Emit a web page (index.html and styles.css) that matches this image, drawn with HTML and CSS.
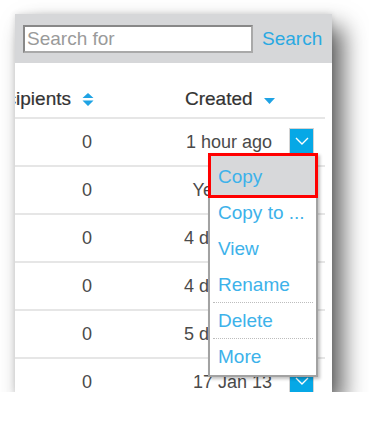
FILE: index.html
```html
<!DOCTYPE html>
<html lang="en">
<head>
  <meta charset="UTF-8">
  <meta name="viewport" content="width=device-width, initial-scale=1.0">
  <title>Messages</title>
  <link rel="stylesheet" href="styles.css">
</head>
<body>
  <div class="frame">
    <div class="search-bar">
      <input class="search-input" type="text" placeholder="Search for">
      <a class="search-link" href="#">Search</a>
    </div>

    <div class="table">
      <div class="head">
        <div class="num"><span class="label">Recipients</span>
          <svg class="sort" width="12" height="13" viewBox="0 0 12 13"><path d="M6 0 L11.5 5 H0.5 Z M0.5 7.5 H11.5 L6 13 Z" fill="#1fa3e4"/></svg>
        </div>
        <div class="date-h">Created
          <svg class="down" width="11" height="6" viewBox="0 0 11 6"><path d="M0 0 H11 L5.5 6 Z" fill="#1fa3e4"/></svg>
        </div>
      </div>

      <div class="row"><div class="num">0</div><div class="date">1 hour ago</div><button class="drop"><svg width="14" height="8" viewBox="0 0 14 8"><path d="M1 1 L7 7 L13 1" fill="none" stroke="#fff" stroke-width="1.4"/></svg></button></div>
      <div class="row"><div class="num">0</div><div class="date">Yesterday</div><button class="drop"><svg width="14" height="8" viewBox="0 0 14 8"><path d="M1 1 L7 7 L13 1" fill="none" stroke="#fff" stroke-width="1.4"/></svg></button></div>
      <div class="row"><div class="num">0</div><div class="date">4 days ago</div><button class="drop"><svg width="14" height="8" viewBox="0 0 14 8"><path d="M1 1 L7 7 L13 1" fill="none" stroke="#fff" stroke-width="1.4"/></svg></button></div>
      <div class="row"><div class="num">0</div><div class="date">4 days ago</div><button class="drop"><svg width="14" height="8" viewBox="0 0 14 8"><path d="M1 1 L7 7 L13 1" fill="none" stroke="#fff" stroke-width="1.4"/></svg></button></div>
      <div class="row"><div class="num">0</div><div class="date">5 days ago</div><button class="drop"><svg width="14" height="8" viewBox="0 0 14 8"><path d="M1 1 L7 7 L13 1" fill="none" stroke="#fff" stroke-width="1.4"/></svg></button></div>
      <div class="row"><div class="num">0</div><div class="date">17 Jan 13</div><button class="drop"><svg width="14" height="8" viewBox="0 0 14 8"><path d="M1 1 L7 7 L13 1" fill="none" stroke="#fff" stroke-width="1.4"/></svg></button></div>
    </div>

    <ul class="menu">
      <li class="item active">Copy</li>
      <li class="item">Copy to ...</li>
      <li class="item">View</li>
      <li class="item sep">Rename</li>
      <li class="item sep">Delete</li>
      <li class="item">More</li>
    </ul>
  </div>
</body>
</html>
```

FILE: styles.css
```css
body { margin: 0; background: #fff; font-family: "Liberation Sans", Arial, sans-serif; }

.frame { position: relative; width: 317px; height: 378px; margin: 14px 0 0 15px; background: #fff; overflow: hidden; box-shadow: 11px 13px 22px rgba(0,0,0,0.62), 0 0 6px rgba(0,0,0,0.12); }

.search-bar { display: flex; align-items: center; height: 49px; padding-left: 8px; background: #d6d7d9; }
.search-input { box-sizing: border-box; width: 230px; height: 28px; margin: 0; padding: 0 2px; border: 2px solid #888; border-right-color: #a9a9a9; border-bottom-color: #a9a9a9; background: #fff; font: 19px "Liberation Sans", Arial, sans-serif; color: #444; outline: none; }
.search-input::placeholder { color: #9a9a9a; }
.search-link { margin-left: 9px; font-size: 19px; color: #2aa9e2; text-decoration: none; }

.table { margin-right: 7px; }
.head, .row { display: flex; white-space: nowrap; border-bottom: 2px solid #e6e6e6; }
.head { height: 54px; align-items: flex-end; font-size: 19px; color: #333; }
.head .num, .head .date-h { display: flex; align-items: center; height: 22px; margin-bottom: 7px; -webkit-text-stroke: 0.2px #333; }
.row { height: 46px; align-items: center; font-size: 18px; color: #4a4a4a; }

.num { box-sizing: border-box; flex-shrink: 0; width: 85px; padding-right: 8px; text-align: right; justify-content: flex-end; }
.head .num { padding-right: 6px; }
.label { flex-shrink: 0; }
.sort { flex-shrink: 0; margin-left: 11px; }
.date-h { padding-left: 85px; }
.down { flex-shrink: 0; margin-left: 11px; margin-top: 4px; }
.date { flex-shrink: 0; width: 172px; text-align: right; }

.drop { box-sizing: border-box; flex-shrink: 0; display: flex; align-items: center; justify-content: center; width: 25px; height: 26px; margin: -3px 0 0 17px; padding: 0; border: 1px solid #d4d4d4; background: #06a8e6; }

.menu { position: absolute; left: 193px; top: 139px; box-sizing: border-box; width: 110px; margin: 0; padding: 0; list-style: none; background: #fff; border: 2px solid #a2a2a2; box-shadow: 2px 2px 3px rgba(0,0,0,0.25); }
.item { height: 36px; line-height: 36px; padding-left: 8px; font-size: 19px; color: #3db2ea; }
.item.active { height: 36px; margin: -2px -2px -3px; padding: 3px 0 0 7px; border: 3px solid #f00; background: #d7d8da; }
.item.sep { box-sizing: border-box; margin: 0 3px; padding-left: 5px; border-bottom: 1px dotted #bdbdbd; }
```
